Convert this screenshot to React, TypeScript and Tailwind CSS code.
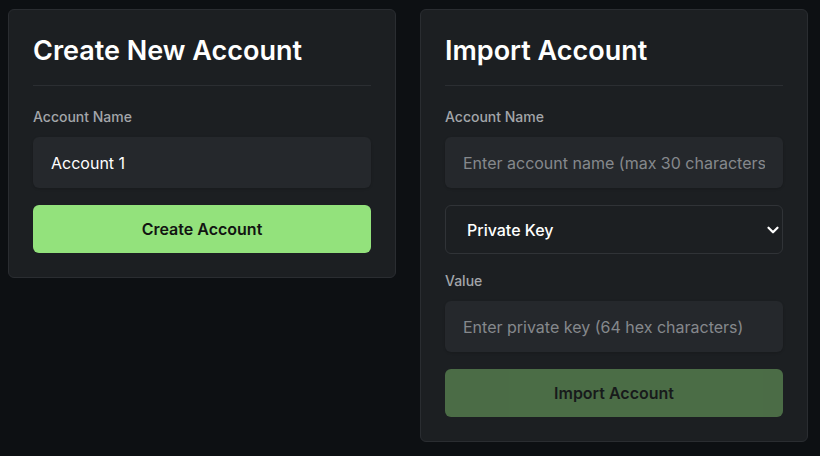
import { ChevronDown } from 'lucide-react';

const font = { fontFamily: 'Inter, "Noto Sans", sans-serif' };

function Label({ children }: { children: React.ReactNode }) {
  return <label className="mb-2.5 block text-[14px] font-medium leading-5 text-[#a3a6aa]">{children}</label>;
}

function TextInput({ value, placeholder }: { value?: string; placeholder?: string }) {
  return (
    <input
      type="text"
      defaultValue={value}
      placeholder={placeholder}
      className="h-[51px] w-full rounded-md bg-[#25282c] px-[18px] text-[16px] text-white shadow-sm outline-none placeholder:text-[#85888c]"
    />
  );
}

export default function App() {
  return (
    <div className="min-h-screen bg-[#0d1013] pl-2 pt-[9px] text-white" style={font}>
      <div className="flex items-start gap-6">
        <div className="w-[388px] rounded-md border border-[#2a2d31] bg-[#1c1f22] p-6">
          <h2 className="border-b border-[#2b2e32] pb-[18px] text-[27px] font-semibold leading-[33px]">Create New Account</h2>
          <div className="mt-[21px]">
            <Label>Account Name</Label>
            <TextInput value="Account 1" />
          </div>
          <button className="mt-[17px] h-[48px] w-full rounded-md bg-[#93e27c] text-[16px] font-semibold text-[#121412]">
            Create Account
          </button>
        </div>

        <div className="w-[388px] rounded-md border border-[#2a2d31] bg-[#1c1f22] p-6">
          <h2 className="border-b border-[#2b2e32] pb-[18px] text-[27px] font-semibold leading-[33px]">Import Account</h2>
          <div className="mt-[21px]">
            <Label>Account Name</Label>
            <TextInput placeholder="Enter account name (max 30 characters)" />
          </div>
          <div className="relative mt-[17px]">
            <select className="h-[49px] w-full appearance-none rounded-md border border-[#303337] bg-[#1c1f22] pl-[21px] text-[16px] font-medium text-white outline-none">
              <option>Private Key</option>
              <option>Mnemonic</option>
            </select>
            <ChevronDown className="pointer-events-none absolute right-px top-1/2 h-[18px] w-[18px] -translate-y-1/2 text-white" strokeWidth={3} />
          </div>
          <div className="mt-[17px]">
            <Label>Value</Label>
            <TextInput placeholder="Enter private key (64 hex characters)" />
          </div>
          <button className="mt-[17px] h-[48px] w-full rounded-md bg-[#93e27c] text-[16px] font-semibold text-[#121412] opacity-40">
            Import Account
          </button>
        </div>
      </div>
    </div>
  );
}
